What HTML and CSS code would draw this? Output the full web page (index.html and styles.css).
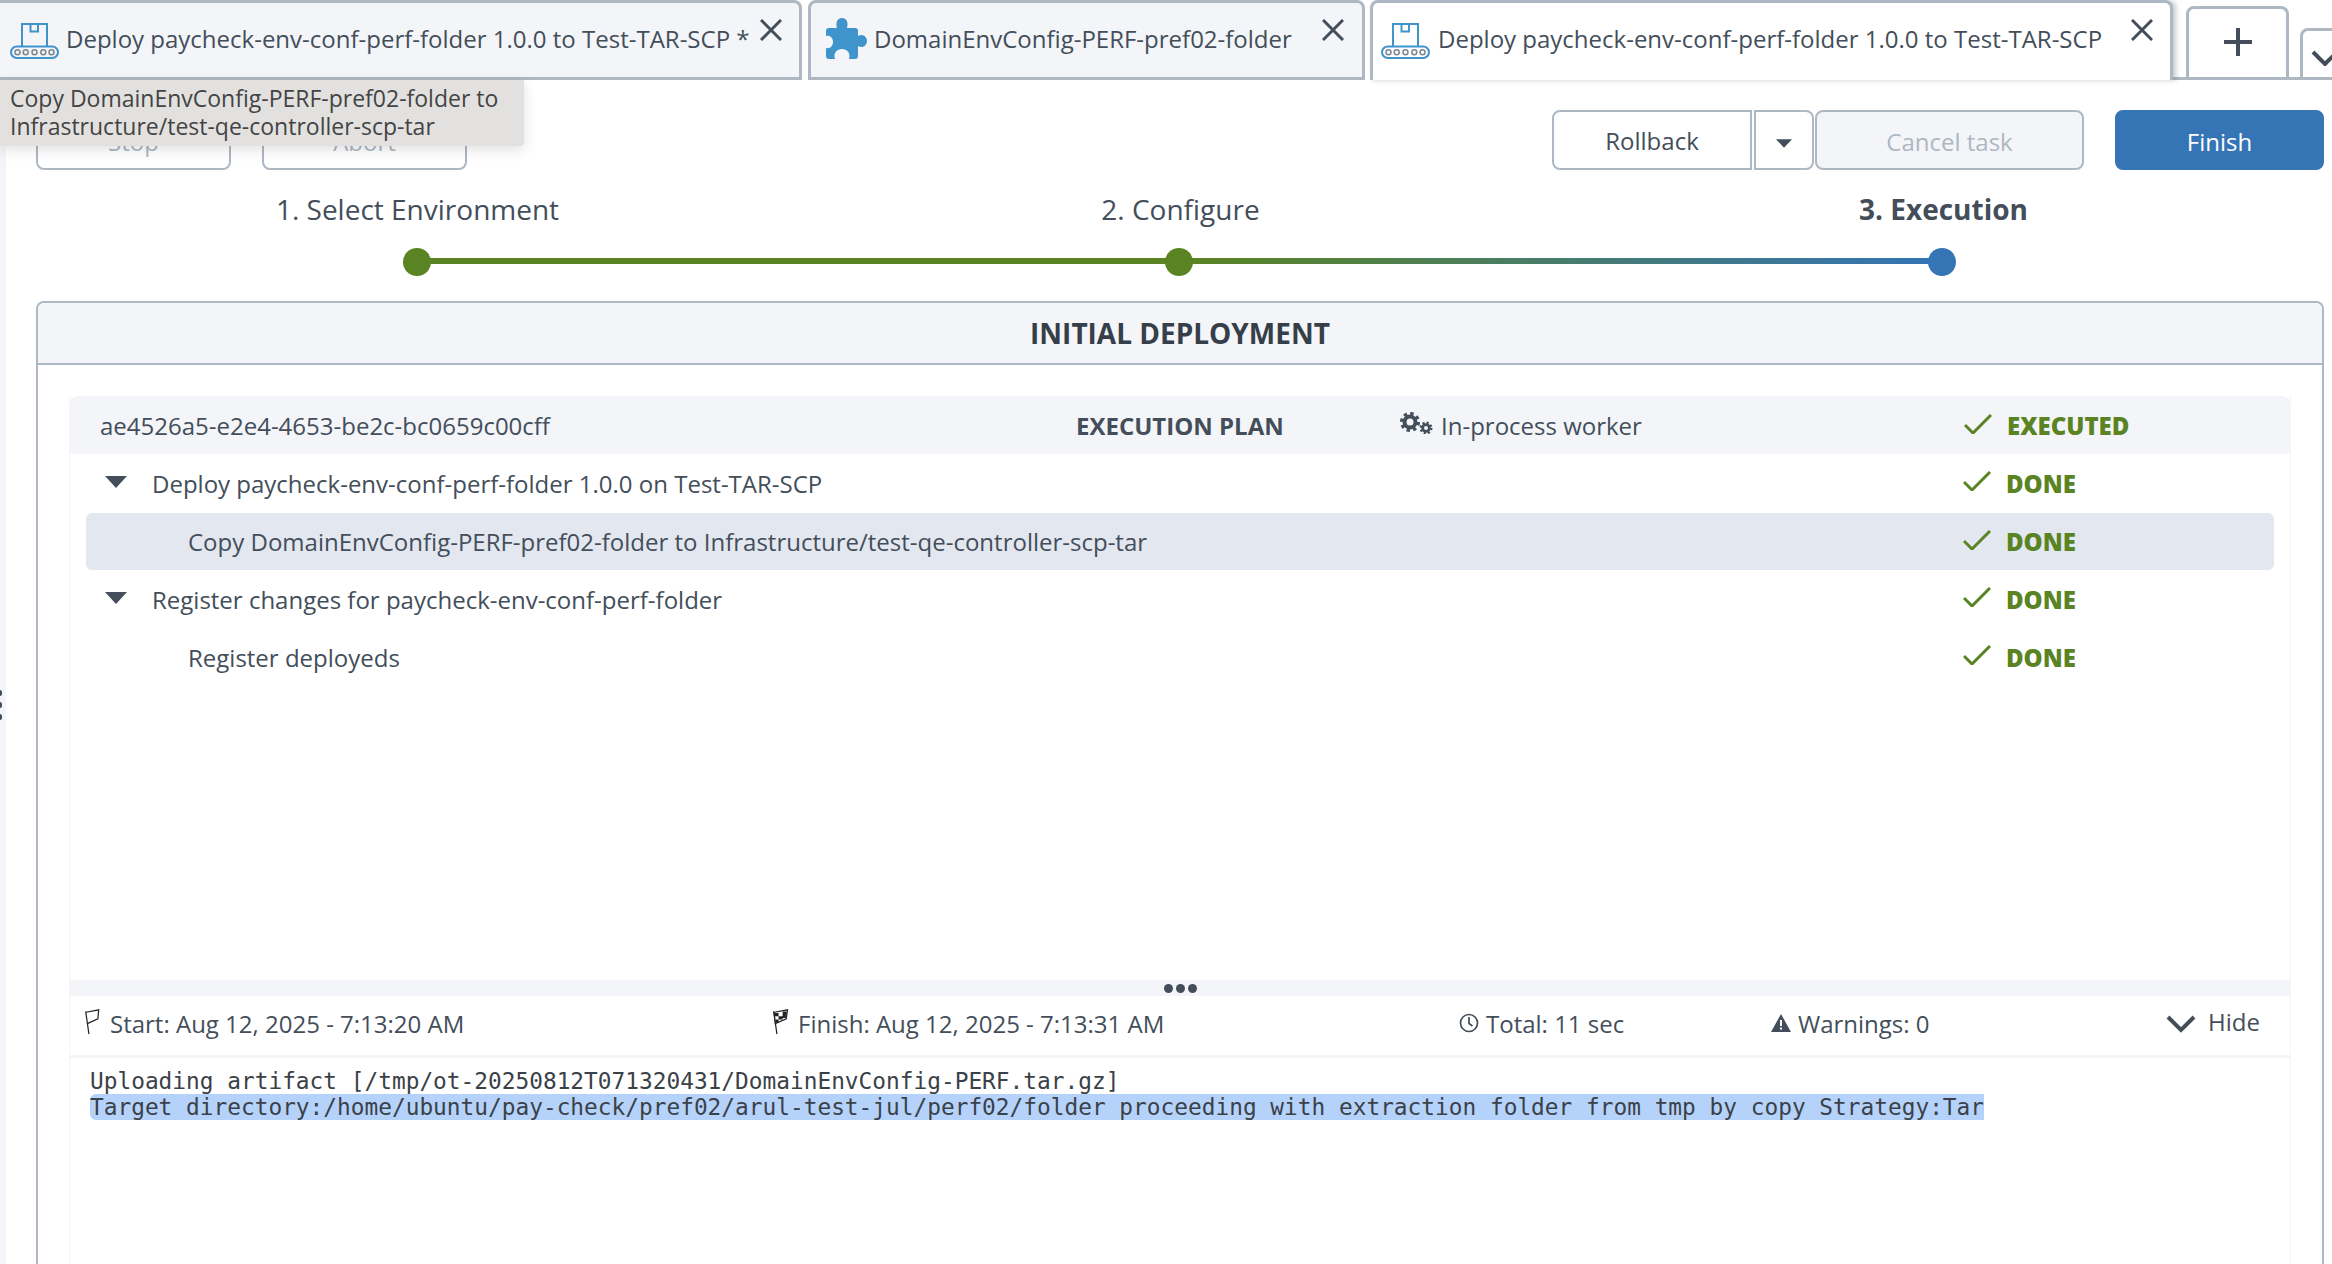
FILE: index.html
```html
<!DOCTYPE html>
<html lang="en">
<head>
<meta charset="utf-8">
<title>Deploy</title>
<link rel="stylesheet" href="styles.css">
</head>
<body>
<svg class="defs" width="0" height="0" aria-hidden="true">
  <symbol id="conveyor" viewBox="0 0 49 36">
    <path d="M12 23V1H37V23M20.500 1V8.500H28V1" fill="none" stroke="#3f95cb" stroke-width="2"/>
    <rect x="1" y="23.500" width="47" height="11.500" rx="5.750" fill="none" stroke="#3f95cb" stroke-width="2"/>
    <g fill="none" stroke="#7d8791" stroke-width="1.500">
      <circle cx="7.500" cy="29.300" r="2.500"/><circle cx="15.700" cy="29.300" r="2.500"/><circle cx="24.500" cy="29.300" r="2.500"/><circle cx="33.300" cy="29.300" r="2.500"/><circle cx="41.500" cy="29.300" r="2.500"/>
    </g>
  </symbol>
  <symbol id="close" viewBox="0 0 22 22">
    <path d="M1 1L21 21M21 1L1 21" fill="none" stroke="#434e5a" stroke-width="3"/>
  </symbol>
  <symbol id="check" viewBox="0 0 28 20">
    <path d="M1 11L9 19L27 1" fill="none" stroke="#5a8423" stroke-width="3"/>
  </symbol>
  <symbol id="tri" viewBox="0 0 22 12">
    <path d="M0 0H22L11 12Z" fill="#434e5a"/>
  </symbol>
</svg>

<header class="tabs">
  <div class="tab tab-first">
    <svg class="ico-conveyor"><use href="#conveyor"/></svg>
    <span class="tab-label">Deploy paycheck-env-conf-perf-folder 1.0.0 to Test-TAR-SCP *</span>
    <svg class="ico-close"><use href="#close"/></svg>
  </div>
  <div class="tab tab-second">
    <svg class="ico-puzzle" viewBox="0 0 41 41"><path fill="#3f95cb" d="M3 10H11C9 4 12 0 16 0C20 0 23 4 21 10H29Q32 10 32 13V18C37 15 41 19 41 23C41 27 37 31 32 28V38Q32 41 29 41H23C25 35 21 31 16 31C11 31 7 35 9 41H3Q0 41 0 38V30C4 31 7 28 7 24C7 20 4 17 0 18V13Q0 10 3 10Z"/></svg>
    <span class="tab-label">DomainEnvConfig-PERF-pref02-folder</span>
    <svg class="ico-close"><use href="#close"/></svg>
  </div>
  <div class="tab tab-active">
    <svg class="ico-conveyor"><use href="#conveyor"/></svg>
    <span class="tab-label">Deploy paycheck-env-conf-perf-folder 1.0.0 to Test-TAR-SCP</span>
    <svg class="ico-close"><use href="#close"/></svg>
  </div>
  <div class="tab-rest">
    <div class="tab-add"><svg class="ico-plus" viewBox="0 0 30 30"><path d="M15 1V29M1 15H29" fill="none" stroke="#434e5a" stroke-width="4"/></svg></div>
    <div class="tab-more"><svg class="ico-more" viewBox="0 0 28 16"><path d="M2 2L14 14L26 2" fill="none" stroke="#434e5a" stroke-width="4"/></svg></div>
  </div>
</header>

<div class="main">
  <div class="rail"></div>
  <div class="content">
    <div class="toolbar">
      <div class="btn-group left">
        <button class="btn btn-stop">Stop</button>
        <button class="btn btn-abort">Abort</button>
      </div>
      <div class="btn-group right">
        <button class="btn btn-rollback">Rollback</button>
        <button class="btn btn-caret"><svg class="ico-caret"><use href="#tri"/></svg></button>
        <button class="btn btn-cancel">Cancel task</button>
        <button class="btn btn-finish">Finish</button>
      </div>
    </div>

    <div class="stepper">
      <div class="step-labels">
        <span>1. Select Environment</span>
        <span>2. Configure</span>
        <span class="current">3. Execution</span>
      </div>
      <div class="track">
        <i class="dot green"></i><i class="seg green"></i><i class="dot green"></i><i class="seg fade"></i><i class="dot blue"></i>
      </div>
    </div>

    <section class="panel">
      <h2 class="panel-title">INITIAL DEPLOYMENT</h2>
      <div class="panel-body">
        <div class="plan">
          <div class="plan-head">
            <span class="plan-id">ae4526a5-e2e4-4653-be2c-bc0659c00cff</span>
            <strong class="plan-name">EXECUTION PLAN</strong>
            <span class="plan-worker">
              <svg class="ico-gears" viewBox="0 0 33 22">
                <g fill="none" stroke="#434e5a">
                  <circle cx="10" cy="10" r="5.500" stroke-width="4"/>
                  <circle cx="10" cy="10" r="8.300" stroke-width="3.500" stroke-dasharray="3.300 3.220"/>
                  <circle cx="26" cy="16" r="3.400" stroke-width="2.800"/>
                  <circle cx="26" cy="16" r="5.300" stroke-width="2.400" stroke-dasharray="2.100 2.060"/>
                </g>
              </svg>
              In-process worker
            </span>
            <span class="status"><svg class="ico-check"><use href="#check"/></svg><b>EXECUTED</b></span>
          </div>
          <div class="row">
            <span class="row-main"><svg class="ico-tri"><use href="#tri"/></svg>Deploy paycheck-env-conf-perf-folder 1.0.0 on Test-TAR-SCP</span>
            <span class="status"><svg class="ico-check"><use href="#check"/></svg><b>DONE</b></span>
          </div>
          <div class="row row-child row-selected">
            <span class="row-main">Copy DomainEnvConfig-PERF-pref02-folder to Infrastructure/test-qe-controller-scp-tar</span>
            <span class="status"><svg class="ico-check"><use href="#check"/></svg><b>DONE</b></span>
          </div>
          <div class="row">
            <span class="row-main"><svg class="ico-tri"><use href="#tri"/></svg>Register changes for paycheck-env-conf-perf-folder</span>
            <span class="status"><svg class="ico-check"><use href="#check"/></svg><b>DONE</b></span>
          </div>
          <div class="row row-child">
            <span class="row-main">Register deployeds</span>
            <span class="status"><svg class="ico-check"><use href="#check"/></svg><b>DONE</b></span>
          </div>
        </div>

        <div class="splitter"><i></i><i></i><i></i></div>

        <div class="info">
          <span class="info-item info-start">
            <svg class="ico-flag" viewBox="0 0 20 32"><path d="M5 31L1 3M1.500 4L17 1L16 12L3 18" fill="none" stroke="#222" stroke-width="1.500"/></svg>
            Start: Aug 12, 2025 - 7:13:20 AM
          </span>
          <span class="info-item info-finish">
            <svg class="ico-flag" viewBox="0 0 20 32"><path d="M5 31L1 3" fill="none" stroke="#222" stroke-width="1.500"/><path d="M1.500 4L18 1L16.500 12L3 18Z" fill="#fff" stroke="#222" stroke-width="1.500"/><path d="M2 5H7V9H2ZM12 3H17V7H12ZM7 9H12V13H7ZM3 13H7V17H3ZM12 7H16V11H12Z" fill="#222"/></svg>
            Finish: Aug 12, 2025 - 7:13:31 AM
          </span>
          <span class="info-item info-total">
            <svg class="ico-clock" viewBox="0 0 20 20"><circle cx="10" cy="10" r="8.500" fill="none" stroke="#434e5a" stroke-width="1.700"/><path d="M10 4V10.500L13.500 13" fill="none" stroke="#434e5a" stroke-width="1.700"/></svg>
            Total: 11 sec
          </span>
          <span class="info-item info-warn">
            <svg class="ico-warn" viewBox="0 0 20 18"><path fill-rule="evenodd" fill="#434e5a" d="M10 0L20 18H0ZM9 6H11V12H9ZM9 13.500H11V15.500H9Z"/></svg>
            Warnings: 0
          </span>
          <span class="info-item info-hide">
            <svg class="ico-hide" viewBox="0 0 30 18"><path d="M2 2L15 15L28 2" fill="none" stroke="#434e5a" stroke-width="4"/></svg>
            <span class="hide-label">Hide</span>
          </span>
        </div>

        <pre class="log"><span class="log-line">Uploading artifact [/tmp/ot-20250812T071320431/DomainEnvConfig-PERF.tar.gz]</span>
<span class="log-line log-selected">Target directory:/home/ubuntu/pay-check/pref02/arul-test-jul/perf02/folder proceeding with extraction folder from tmp by copy Strategy:Tar</span></pre>
      </div>
    </section>
  </div>
</div>

<div class="tooltip">Copy DomainEnvConfig-PERF-pref02-folder to<br>Infrastructure/test-qe-controller-scp-tar</div>
<div class="handle"><i></i><i></i><i></i></div>
</body>
</html>
```

FILE: styles.css
```css
* { box-sizing: border-box; }
html, body { margin: 0; padding: 0; }
body {
  position: relative;
  width: 2332px;
  height: 1264px;
  overflow: hidden;
  background: #fff;
  color: #434e5a;
  font-family: "Open Sans", "Liberation Sans", sans-serif;
  font-size: 24px;
}
.defs { position: absolute; }
svg { display: block; flex: none; }

/* Tabs */
.tabs { display: flex; height: 80px; align-items: stretch; }
.tab {
  position: relative;
  flex: none;
  display: flex;
  align-items: flex-start;
  border: 3px solid #adb8c3;
  background: #f3f5f9;
  border-radius: 8px 8px 0 0;
}
.tab-first { width: 802px; margin-right: 6px; border-left: 0; padding: 20px 0 0 10px; border-top-left-radius: 0; }
.tab-second { width: 557px; margin-right: 5px; padding: 15px 0 0 15px; }
.tab-active { width: 803px; background: #fff; border-bottom: 0; padding: 20px 0 0 8px; box-shadow: 3px 0 5px rgba(70, 80, 90, .3); z-index: 1; }
.tab-label { line-height: 34px; white-space: nowrap; margin-top: -1px; }
.tab-first .tab-label { margin-left: 7px; }
.tab-active .tab-label { margin-left: 8px; }
.tab-second .tab-label { margin-left: 0; margin-top: 4px; padding-left: 7px; }
.ico-conveyor { width: 49px; height: 36px; }
.ico-puzzle { width: 41px; height: 41px; }
.ico-close { position: absolute; top: 16px; width: 22px; height: 22px; }
.tab-first .ico-close { right: 17px; }
.tab-second .ico-close { right: 18px; }
.tab-active .ico-close { right: 17px; }
.tab-rest {
  flex: 1;
  min-width: 0;
  display: flex;
  align-items: flex-end;
  gap: 11px;
  padding-left: 13px;
  border-bottom: 3px solid #adb8c3;
}
.tab-add, .tab-more {
  border: 3px solid #adb8c3;
  border-bottom: 0;
  border-radius: 8px 8px 0 0;
  background: #fff;
  display: flex;
  justify-content: center;
}
.tab-add { flex: none; width: 103px; height: 71px; padding-top: 18px; }
.tab-more { flex: 1; height: 49px; margin-right: -16px; padding: 19px 0 0 8px; justify-content: flex-start; }
.ico-plus { width: 30px; height: 30px; }
.ico-more { width: 28px; height: 16px; }

/* Layout */
.main { display: flex; height: 1184px; }
.rail { width: 6px; background: #f3f5f9; }
.content { flex: 1; padding: 30px 8px 0 30px; min-width: 0; }

/* Toolbar */
.toolbar { display: flex; justify-content: space-between; height: 60px; }
.btn-group { display: flex; }
.btn-group.left { gap: 31px; }
.btn {
  font: inherit;
  height: 60px;
  color: #434e5a;
  background: #fff;
  border: 2px solid #adb8c3;
  border-radius: 8px;
  padding: 0;
}
.btn-stop { width: 195px; color: #adb8c3; padding-top: 2px; }
.btn-abort { width: 205px; color: #adb8c3; padding-top: 2px; }
.btn-rollback { width: 200px; border-radius: 8px 0 0 8px; }
.btn-caret { width: 60px; margin-left: 2px; border-radius: 0 8px 8px 0; display: flex; align-items: center; justify-content: center; padding-top: 6px; }
.ico-caret { width: 16px; height: 9px; }
.btn-cancel { width: 269px; margin-left: 1px; background: #f3f5f9; color: #adb8c3; padding-top: 2px; }
.btn-finish { width: 209px; margin-left: 31px; background: #3574b5; border-color: #3574b5; color: #fff; padding-top: 2px; }

/* Stepper */
.stepper { display: flex; flex-direction: column; align-items: center; height: 131px; padding: 19px 2px 0 0; }
.step-labels { display: grid; grid-template-columns: repeat(3, 763px); justify-items: center; font-size: 28px; line-height: 40px; height: 59px; margin-left: 3px; }
.current { font-weight: 700; }
.track { display: flex; align-items: center; width: 1553px; height: 28px; }
.track i { display: block; }
.dot { width: 28px; height: 28px; border-radius: 50%; flex: none; position: relative; }
.dot.green { background: #5a8423; }
.dot.blue { background: #3574b5; }
.seg { flex: 1; height: 6px; margin: -2px -1px 0; }
.seg.green { background: #5a8423; }
.seg.fade { background: linear-gradient(90deg, #5a8423, #3574b5); }

/* Panel */
.panel { border: 2px solid #adb8c3; border-bottom: 0; border-radius: 8px 8px 0 0; height: 963px; }
.panel-title {
  margin: 0;
  height: 62px;
  border-bottom: 2px solid #adb8c3;
  background: #f3f5f9;
  border-radius: 6px 6px 0 0;
  font-size: 28px;
  font-weight: 700;
  line-height: 60px;
  text-align: center;
  color: #363f49;
}
.panel-body { padding: 31px 31px 0; display: flex; flex-direction: column; }
.plan { height: 584px; border: solid #f3f5f9; border-width: 0 1px; }
.plan-head {
  display: grid;
  grid-template-columns: 976px 324px 564px 1fr;
  align-items: center;
  height: 58px;
  padding: 1px 0 0 30px;
  background: #f3f5f9;
  border-radius: 8px 8px 0 0;
}
.plan-name { font-weight: 700; color: #434e5a; }
.plan-worker { display: flex; align-items: center; gap: 8px; }
.ico-gears { width: 33px; height: 22px; margin-top: -6px; }
.row { display: flex; align-items: center; height: 58px; margin: 0 16px; padding-left: 19px; }
.row-child { padding-left: 102px; }
.row-selected { background: #e3e7ef; border-radius: 6px; height: 57px; margin-top: 1px; }
.row-main { flex: 1; display: flex; align-items: center; white-space: nowrap; }
.ico-tri { width: 22px; height: 12px; margin-right: 25px; margin-top: -2px; }
.status { display: flex; align-items: center; gap: 15px; color: #5a8423; font-weight: 700; }
.row .status { width: 311px; }
.ico-check { width: 28px; height: 20px; margin-top: -4px; }
.splitter { height: 16px; background: #f3f5f9; display: flex; justify-content: center; align-items: center; gap: 3px; }
.splitter i { width: 9px; height: 9px; border-radius: 50%; background: #434e5a; }

/* Info row */
.info {
  display: grid;
  grid-template-columns: 688px 688px 312px 395px 1fr;
  align-items: center;
  height: 62px;
  padding: 0 0 4px 13px;
  border: solid #f3f5f9;
  border-width: 0 1px 3px;
}
.info-item { display: flex; align-items: center; gap: 7px; white-space: nowrap; }
.ico-flag { width: 20px; height: 26px; margin-top: -4px; }
.ico-clock { width: 20px; height: 20px; margin-top: -2px; }
.ico-warn { width: 20px; height: 18px; margin-top: -2px; }
.ico-hide { width: 30px; height: 18px; margin-right: 5px; }
.hide-label { margin-top: -4px; }

/* Log */
.log {
  margin: 0;
  height: 206px;
  padding: 10px 14px 0 20px;
  font-family: "DejaVu Sans Mono", "Liberation Mono", monospace;
  font-size: 22.800px;
  line-height: 26px;
  color: #3b4148;
  border: solid #f3f5f9;
  border-width: 0 1px;
}
.log-selected { background: #b5d3fa; border-radius: 6px 0 0 6px; display: inline-block; height: 26px; }

/* Overlays */
.tooltip {
  position: absolute;
  left: 0;
  top: 80px;
  width: 524px;
  height: 66px;
  padding: 4px 0 0 10px;
  background: #e2e1df;
  border-radius: 0 0 4px 0;
  box-shadow: 0 4px 14px rgba(0, 0, 0, .12);
  color: #444;
  font-size: 23px;
  line-height: 28px;
  white-space: nowrap;
  z-index: 5;
}
.handle { position: absolute; left: 0; top: 690px; display: flex; flex-direction: column; gap: 6px; }
.handle i { display: block; width: 2px; height: 6px; border-radius: 0 2px 2px 0; background: #434e5a; }
```
